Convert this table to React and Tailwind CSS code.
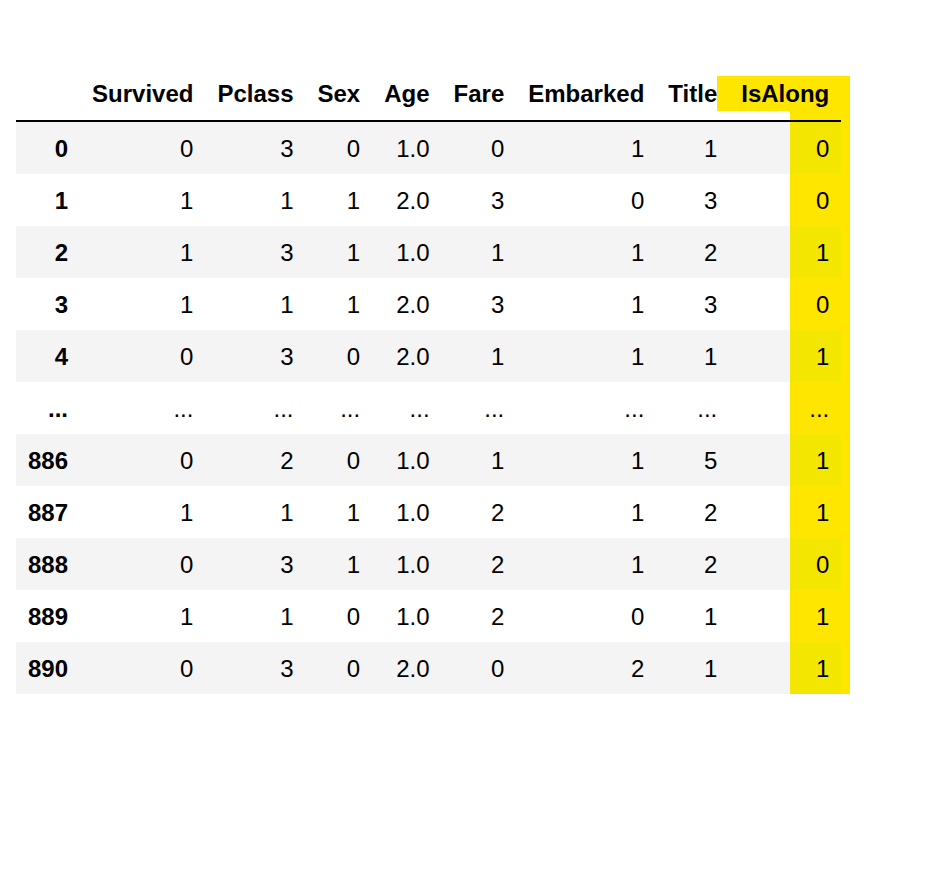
const columns = ["Survived", "Pclass", "Sex", "Age", "Fare", "Embarked", "Title", "IsAlong"];

const rows = [
  ["0", "0", "3", "0", "1.0", "0", "1", "1", "0"],
  ["1", "1", "1", "1", "2.0", "3", "0", "3", "0"],
  ["2", "1", "3", "1", "1.0", "1", "1", "2", "1"],
  ["3", "1", "1", "1", "2.0", "3", "1", "3", "0"],
  ["4", "0", "3", "0", "2.0", "1", "1", "1", "1"],
  ["...", "...", "...", "...", "...", "...", "...", "...", "..."],
  ["886", "0", "2", "0", "1.0", "1", "1", "5", "1"],
  ["887", "1", "1", "1", "1.0", "2", "1", "2", "1"],
  ["888", "0", "3", "1", "1.0", "2", "1", "2", "0"],
  ["889", "1", "1", "0", "1.0", "2", "0", "1", "1"],
  ["890", "0", "3", "0", "2.0", "0", "2", "1", "1"],
];

export default function App() {
  return (
    <div className="min-h-screen bg-white pl-4 pt-[68px] font-['Liberation_Sans',Arial,sans-serif] text-[24px] text-black">
      <div className="relative inline-block">
        {/* marker highlight behind the IsAlong column */}
        <div className="absolute left-[701px] top-[8px] h-[35px] w-[133px] bg-[#ffe600]" />
        <div className="absolute left-[774px] top-[43px] bottom-0 w-[60px] bg-[#ffe600]" />

        <table className="relative border-separate border-spacing-0">
          <thead>
            <tr>
              <th className="h-[54px] border-b-2 border-black px-3 py-0"></th>
              {columns.map((c) => (
                <th key={c} className="h-[54px] border-b-2 border-black px-3 py-0 text-right font-bold">
                  {c}
                </th>
              ))}
            </tr>
          </thead>
          <tbody>
            {rows.map((r, i) => {
              const striped = i % 2 === 0;
              return (
                <tr key={r[0] + i} className={striped ? "bg-[#f4f4f4]" : ""}>
                  <th className="h-[52px] px-3 pt-px pb-0 text-right font-bold">{r[0]}</th>
                  {r.slice(1).map((v, j) => (
                    <td
                      key={j}
                      className={
                        j === 7 && striped
                          ? "h-[52px] bg-[linear-gradient(to_right,#f4f4f4_61px,#f3e600_61px)] px-3 pt-px pb-0 text-right"
                          : "h-[52px] px-3 pt-px pb-0 text-right"
                      }
                    >
                      {v}
                    </td>
                  ))}
                </tr>
              );
            })}
          </tbody>
        </table>
      </div>
    </div>
  );
}
